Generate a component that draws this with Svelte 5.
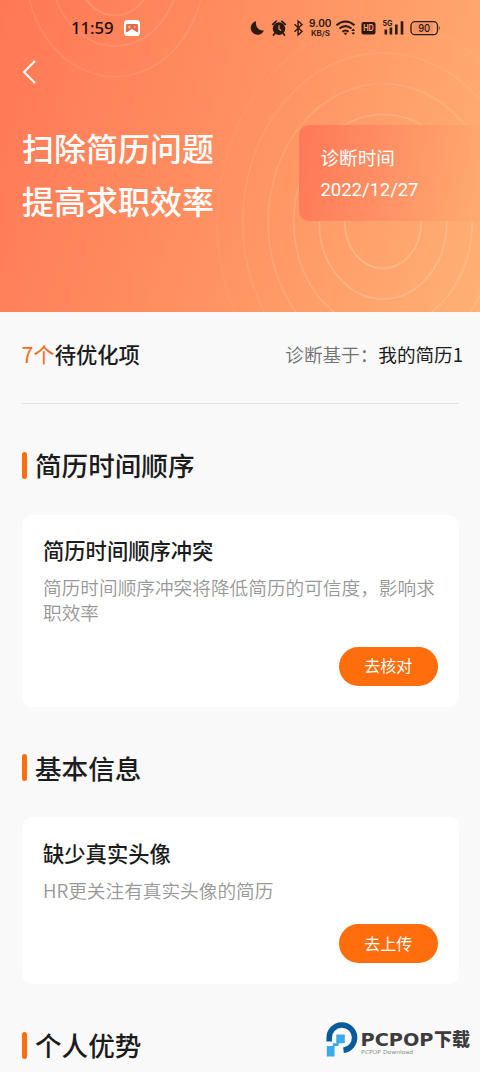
<!--
  App.svelte — Resume diagnosis report.
  Banner with the diagnosis date, summary row, then one section per issue group.
-->
<script lang="ts">
  type Issue = { title: string; desc: string; action: string };
  type Section = { name: string; issues: Issue[] };

  const count = 7;
  const resume = '我的简历1';
  const date = '2022/12/27';

  const sections: Section[] = [
    {
      name: '简历时间顺序',
      issues: [
        {
          title: '简历时间顺序冲突',
          desc: '简历时间顺序冲突将降低简历的可信度，影响求职效率',
          action: '去核对',
        },
      ],
    },
    {
      name: '基本信息',
      issues: [
        {
          title: '缺少真实头像',
          desc: 'HR更关注有真实头像的简历',
          action: '去上传',
        },
      ],
    },
    { name: '个人优势', issues: [] },
  ];

  // Ripple rings fade out the further they are from the centre
  const rings = [0, 1, 2, 3, 4, 5].map((n) => ({
    rx: 38.3 + n * 25.5,
    ry: 46.3 + n * 30.7,
    opacity: 0.32 - n * 0.05,
  }));
</script>

<div class="page">
  <header class="banner">
    <svg class="ripples" viewBox="0 0 480 312" fill="none" stroke="#ffe0bc" stroke-width="1.8">
      {#each rings as r}
        <ellipse cx="383" cy="222" rx={r.rx} ry={r.ry} stroke-opacity={r.opacity} />
      {/each}
      {#each rings.slice(0, 3) as r}
        <ellipse cx="115" cy="-31" rx={r.rx} ry={r.ry} stroke-opacity={r.opacity * 0.55} />
      {/each}
    </svg>

    <div class="status">
      <span class="clock">11:59</span>
      <svg class="app-icon" viewBox="0 0 16 16">
        <rect width="16" height="16" rx="3.6" fill="#fff" />
        <path d="M3.2 4h9.6q1 0 1.1 1l.3 6.3q-.2 1.2-1.5.7L8 9l-4.7 3q-1.3.5-1.5-.7L2.1 5q.1-1 1.1-1z" fill="#df6a50" />
        <path d="M5.3 5.5v3M3.8 7h3" stroke="#ffc48d" stroke-width="1" />
        <circle cx="10.8" cy="7.2" r="1.1" fill="#f5a48c" />
      </svg>

      <svg class="tray" viewBox="0 0 192 20">
        <g fill="#2b1a12">
          <!-- do not disturb -->
          <path d="M6.2 3.3A7.2 7.2 0 0 0 13.9 12.4 6.8 6.8 0 1 1 6.2 3.3z" />
          <!-- alarm -->
          <circle cx="29" cy="10.6" r="6.3" />
          <path d="M22.7 6.3l3.4-3M35.3 6.3l-3.4-3M25 15l-1.5 2M33 15l1.5 2" stroke="#2b1a12" stroke-width="1.8" stroke-linecap="round" />
          <path d="M29 7.2v3.8l2.2 1.5" fill="none" stroke="#ff9a6b" stroke-width="1.1" />
          <!-- bluetooth -->
          <path d="M44.5 6.2l7.5 7.2-3.9 3.5V3l3.9 3.5-7.5 7.2" fill="none" stroke="#2b1a12" stroke-width="1.4" />
          <!-- network speed -->
          <text x="59" y="8.9" font-size="10" font-weight="600" textLength="22.5" lengthAdjust="spacingAndGlyphs">9.00</text>
          <text x="61" y="18.2" font-size="7.3" font-weight="600" textLength="19" lengthAdjust="spacingAndGlyphs">KB/S</text>
          <!-- wifi -->
          <g fill="none" stroke="#2b1a12" stroke-width="2">
            <path d="M86.5 7.2q9-7.4 18 0M89.5 10.6q6-4.9 12 0M92.4 13.8q3.1-2.5 6.2 0" />
          </g>
          <path d="M93.5 14.8h4l-2 2.4z" />
          <path d="M101.3 13l1.9-2.4 1.9 2.4zM101.3 14.4l1.9 2.4 1.9-2.4z" />
          <!-- hd voice -->
          <rect x="111.5" y="4" width="14" height="12.6" rx="2" />
          <text x="113.2" y="13.3" font-size="8.3" font-weight="700" textLength="10.6" lengthAdjust="spacingAndGlyphs" class="knockout">HD</text>
          <!-- signal -->
          <text x="132.5" y="8" font-size="8" font-weight="700" textLength="10" lengthAdjust="spacingAndGlyphs">5G</text>
          <path d="M134.5 11.5h2.6v5h-2.6zM139.6 9.5h2.6v7h-2.6zM145 6.5h2.6v10H145zM150.7 3.3h2.6v13.2h-2.6z" />
          <!-- battery -->
          <rect x="163" y="5.3" width="20" height="10" rx="2" fill="#d97f55" fill-opacity=".35" />
          <rect x="161" y="3.7" width="26.5" height="13" rx="4" fill="none" stroke="#2b1a12" stroke-width="1.3" />
          <path d="M189 8q1.7 2.2 0 4.4z" />
          <text x="168.2" y="13.8" font-size="10" font-weight="500" textLength="12" lengthAdjust="spacingAndGlyphs">90</text>
        </g>
      </svg>
    </div>

    <button class="back" aria-label="返回">
      <svg viewBox="0 0 14 24" fill="none" stroke="#fff" stroke-width="2" stroke-linecap="round" stroke-linejoin="round">
        <path d="M12.5 1.5L2 12l10.5 10.5" />
      </svg>
    </button>

    <div class="hero">
      <h1>扫除简历问题<br />提高求职效率</h1>
      <div class="date-card">
        <span>诊断时间</span>
        <span class="date">{date}</span>
      </div>
    </div>
  </header>

  <main>
    <div class="summary">
      <div class="total"><em>{count}个</em>待优化项</div>
      <div class="source">诊断基于：<b>{resume}</b></div>
    </div>

    {#each sections as section}
      <section>
        <h2>{section.name}</h2>
        {#each section.issues as issue}
          <article class="card">
            <h3>{issue.title}</h3>
            <p>{issue.desc}</p>
            <button class="action">{issue.action}</button>
          </article>
        {/each}
      </section>
    {/each}
  </main>

  <div class="watermark">
    <svg viewBox="0 0 146 38">
      <path d="M3.2 20.5V16.5A12.7 12.7 0 1 1 17.5 29.3" fill="none" stroke="#075a9c" stroke-width="5.5" />
      <path d="M10.3 13.5h8.5v8.7h-6.3v2.8h-4v10.500H.8V25h6v-2.800h3.500z" fill="#3da9e8" />
      <text class="brand" x="34.5" y="24.7" font-size="18.5" textLength="73" lengthAdjust="spacingAndGlyphs">PCPOP</text>
      <text class="brand cn" x="108" y="25" font-size="18" textLength="36">下载</text>
      <text class="sub" x="35" y="32.5" font-size="5.5" textLength="52" lengthAdjust="spacingAndGlyphs">PCPOP Download</text>
    </svg>
  </div>
</div>

<style>
  :global(body) {
    background: #f9f9f9;
  }

  .page {
    position: relative;
    width: 480px;
    height: 1072px;
    overflow: hidden;
    background: #f9f9f9;
    color: #1c1c1c;
    font-family: 'Noto Sans CJK SC', sans-serif;
  }

  h1,
  h2,
  h3,
  p {
    margin: 0;
    font-weight: 400;
  }

  button {
    border: 0;
    padding: 0;
    background: none;
    font-family: inherit;
  }

  /* Banner */
  .banner {
    position: relative;
    height: 312px;
    overflow: hidden;
    background: linear-gradient(108deg, #ff7855 0%, #ff9162 50%, #ffb074 100%);
    color: #fff;
  }
  .ripples {
    position: absolute;
    inset: 0;
    width: 480px;
    height: 312px;
  }

  .status {
    position: relative;
    display: flex;
    align-items: center;
    height: 56px;
    padding-left: 71px;
    font-family: Inter, sans-serif;
  }
  .clock {
    width: 53px;
    color: #1d0d08;
    font-family: 'Noto Sans', sans-serif;
    font-size: 16.8px;
    font-weight: 500;
    letter-spacing: -0.1px;
    line-height: 24px;
  }
  .app-icon {
    width: 16px;
    height: 16px;
  }
  .tray {
    width: 192px;
    height: 20px;
    margin-left: 110px;
  }
  .knockout {
    fill: #ff9d6c;
  }

  .back {
    position: relative;
    display: block;
    width: 14px;
    height: 24px;
    margin: 4px 0 0 22px;
  }
  .back svg {
    display: block;
    width: 14px;
    height: 24px;
  }

  .hero {
    position: relative;
    display: flex;
    justify-content: space-between;
    align-items: flex-start;
    padding: 37px 0 0 22px;
  }
  h1 {
    font-size: 32px;
    font-weight: 500;
    line-height: 53px;
  }
  .date-card {
    display: flex;
    flex-direction: column;
    box-sizing: border-box;
    width: 181px;
    height: 96px;
    margin-top: 4px;
    padding: 15px 21.5px;
    border-radius: 10px 0 0 10px;
    background: linear-gradient(100deg, #ff7856, #ff9466 55%, #ffaa70);
    font-size: 18.6px;
    line-height: 33px;
  }
  .date {
    margin-top: 1px;
    font-family: Roboto, sans-serif;
    font-weight: 400;
    letter-spacing: -0.1px;
  }

  main {
    padding: 0 21px 0 21.5px;
  }

  /* Summary */
  .summary {
    display: flex;
    justify-content: space-between;
    align-items: center;
    box-sizing: border-box;
    height: 91px;
    margin-right: -4px;
    padding-bottom: 8px;
    white-space: nowrap;
  }
  .total {
    font-size: 21.3px;
    font-weight: 500;
  }
  .total em {
    color: #f26c1c;
    font-style: normal;
    font-weight: 400;
  }
  .source {
    color: #707070;
    font-size: 18.6px;
    font-weight: 350;
  }
  .source b {
    color: #1c1c1c;
    font-weight: 400;
  }

  /* Sections */
  section {
    padding-top: 46px;
  }
  section:first-of-type {
    border-top: 1px solid #e4e4e4;
  }
  h2 {
    display: flex;
    align-items: center;
    height: 30px;
    font-size: 26.6px;
    font-weight: 500;
    line-height: 30px;
  }
  h2::before {
    content: '';
    width: 5.5px;
    height: 27px;
    margin-right: 8px;
    border-radius: 3px;
    background: #ff6d0c;
  }

  .card {
    display: flex;
    flex-direction: column;
    margin-top: 34.5px;
    padding: 19.5px 21.5px 21px;
    border-radius: 10px;
    background: #fff;
  }
  h3 {
    font-size: 21.3px;
    font-weight: 500;
    line-height: 32px;
  }
  p {
    margin-top: 8px;
    color: #989898;
    font-size: 18.66px;
    font-weight: 350;
    line-height: 25px;
  }
  .action {
    align-self: flex-end;
    width: 98.5px;
    height: 39px;
    margin-top: 22.5px;
    padding-bottom: 2px;
    border-radius: 20px;
    background: #ff6d0c;
    color: #fff;
    font-size: 16px;
  }

  /* Site mark, floats over the list */
  .watermark {
    position: absolute;
    right: 8px;
    bottom: 13px;
    width: 146px;
    height: 38px;
  }
  .watermark svg {
    display: block;
    width: 146px;
    height: 38px;
  }
  .brand {
    fill: #3d3d3f;
    font-family: 'DejaVu Sans', sans-serif;
    font-weight: 700;
  }
  .cn {
    font-family: 'Noto Sans CJK SC', sans-serif;
    font-weight: 900;
  }
  .sub {
    fill: #8c8c8c;
    font-family: 'DejaVu Sans', sans-serif;
  }
</style>
